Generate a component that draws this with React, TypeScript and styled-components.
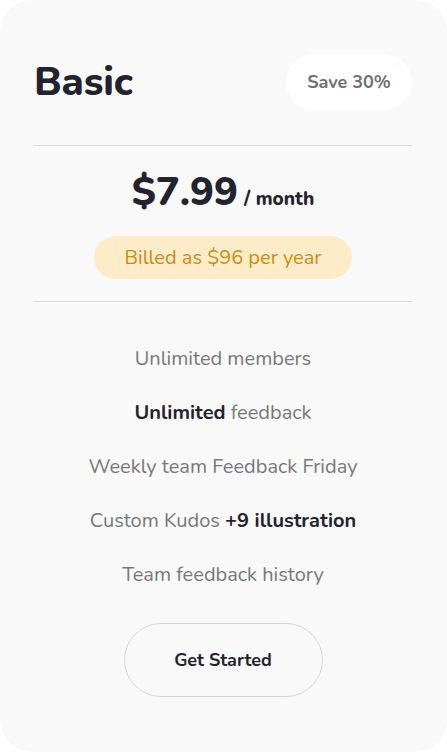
import React from "react";
import styled, { createGlobalStyle } from "styled-components";

const Global = createGlobalStyle`
  html, body { margin: 0; padding: 0; background: #ffffff; }
  body { font-family: "Nunito", "Lato", "Noto Sans", sans-serif; }
  * { box-sizing: border-box; }
`;

const Card = styled.div`
  width: 447px;
  height: 752px;
  background: #f9f9f9;
  border-radius: 32px;
  padding: 54px 35px 0 34px;
  display: flex;
  flex-direction: column;
`;

const Header = styled.div`
  display: flex;
  align-items: center;
  justify-content: space-between;
  height: 56px;
`;

const Title = styled.h1`
  margin: 0;
  font-size: 40px;
  font-weight: 800;
  color: #23222f;
  letter-spacing: -0.2px;
`;

const SaveBadge = styled.div`
  width: 126px;
  height: 56px;
  border-radius: 28px;
  background: #ffffff;
  color: #707070;
  font-size: 18px;
  font-weight: 700;
  display: flex;
  align-items: center;
  justify-content: center;
`;

const Divider = styled.hr<{ $top: number }>`
  border: none;
  height: 1px;
  background: #d9d9d9;
  margin: ${(p) => p.$top}px 0 0 0;
`;

const PriceRow = styled.div`
  margin-top: 22px;
  display: flex;
  align-items: baseline;
  justify-content: center;
  gap: 6px;
  color: #23222f;
  height: 48px;
`;

const Amount = styled.span`
  font-size: 40px;
  font-weight: 800;
  line-height: 48px;
`;

const Period = styled.span`
  font-size: 19px;
  font-weight: 800;
`;

const BilledPill = styled.div`
  align-self: center;
  margin-top: 20px;
  width: 258px;
  height: 43px;
  border-radius: 22px;
  background: #feecc9;
  color: #c98d15;
  font-size: 20px;
  display: flex;
  align-items: center;
  justify-content: center;
`;

const Features = styled.ul`
  list-style: none;
  margin: 30px 0 0 0;
  padding: 0;
`;

const Feature = styled.li`
  height: 54px;
  line-height: 54px;
  text-align: center;
  font-size: 20px;
  color: #787878;
`;

const Strong = styled.strong`
  font-weight: 700;
  color: #23222f;
`;

const Button = styled.button`
  align-self: center;
  margin-top: 21px;
  width: 199px;
  height: 74px;
  border-radius: 37px;
  border: 1px solid #d6d6d6;
  background: transparent;
  font-family: inherit;
  font-size: 18px;
  font-weight: 700;
  color: #23222f;
  cursor: pointer;
`;

export default function App() {
  return (
    <>
      <Global />
      <Card>
        <Header>
          <Title>Basic</Title>
          <SaveBadge>Save 30%</SaveBadge>
        </Header>
        <Divider $top={35} />
        <PriceRow>
          <Amount>$7.99</Amount>
          <Period>/ month</Period>
        </PriceRow>
        <BilledPill>Billed as $96 per year</BilledPill>
        <Divider $top={22} />
        <Features>
          <Feature>Unlimited members</Feature>
          <Feature>
            <Strong>Unlimited</Strong> feedback
          </Feature>
          <Feature>Weekly team Feedback Friday</Feature>
          <Feature>
            Custom Kudos <Strong>+9 illustration</Strong>
          </Feature>
          <Feature>Team feedback history</Feature>
        </Features>
        <Button>Get Started</Button>
      </Card>
    </>
  );
}
